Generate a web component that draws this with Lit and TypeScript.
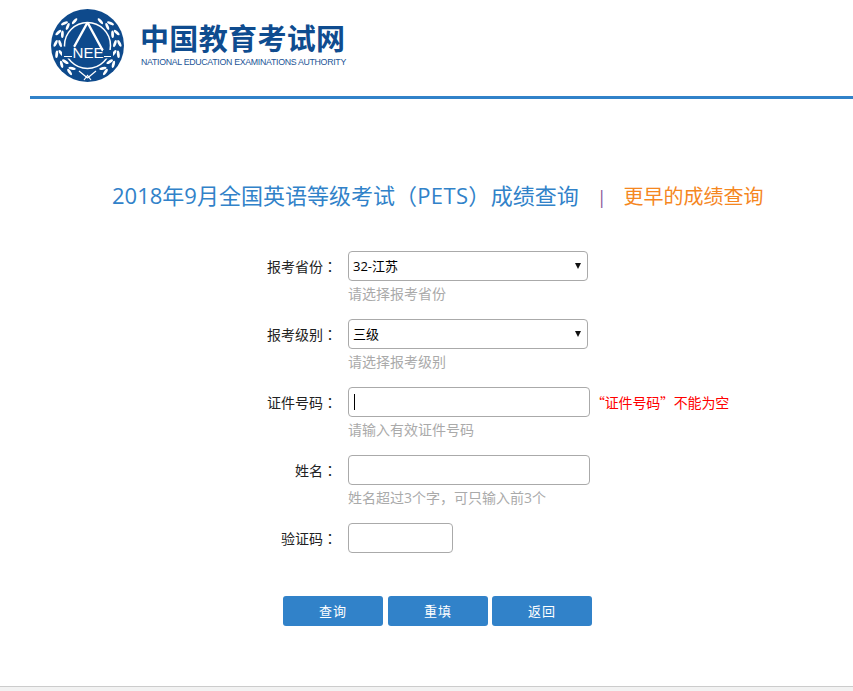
import { LitElement, html, css, svg } from "lit";
import { customElement } from "lit/decorators.js";

const sprigs = [-56, -36, -16, 4, 24, 44, 62];

function leaf(cx: number, cy: number, tilt: number) {
  const x = (36.5 + cx).toFixed(1);
  const y = (36.5 - cy).toFixed(1);
  return svg`<ellipse cx=${x} cy=${y} rx="1.4" ry="3.7" fill="#fff" transform=${`rotate(${tilt.toFixed(1)} ${x} ${y})`}></ellipse>`;
}

function laurel(side: number) {
  return sprigs.map((a) => {
    const rad = (a * Math.PI) / 180;
    const tangent = side * a;
    const inner = leaf(side * 27.5 * Math.cos(rad), 27.5 * Math.sin(rad), -tangent + side * 22);
    const outer = leaf(side * 32 * Math.cos(rad), 32 * Math.sin(rad), -tangent - side * 22);
    return a === 62 ? inner : svg`${inner}${outer}`;
  });
}

const logo = html`<svg class="emblem" viewBox="0 0 73 73" width="73" height="73" aria-hidden="true">
  <circle cx="36.5" cy="36.5" r="36.5" fill="#0e4a8c"></circle>
  <circle cx="36.5" cy="36.5" r="23" fill="none" stroke="#fff" stroke-width="1.5"></circle>
  ${laurel(1)}${laurel(-1)}
  <path d="M36.5 13.5 L23 38 M36.5 13.5 L52 42" stroke="#fff" stroke-width="2.4" fill="none"></path>
  <rect x="11" y="37.5" width="12" height="12" fill="#0e4a8c"></rect>
  <rect x="52" y="41" width="10" height="8.5" fill="#0e4a8c"></rect>
  <path d="M13 47.5 L21 47.5 M53 47.5 L60 47.5" stroke="#fff" stroke-width="1.2"></path>
  <path d="M28 62 L36.5 69 M45 62 L36.5 69 M33 71 L36.5 66.5 L40 71" stroke="#fff" stroke-width="1.2" fill="none"></path>
  <text x="37" y="48.5" text-anchor="middle" class="nee" textLength="31" lengthAdjust="spacingAndGlyphs">NEE</text>
</svg>`;

@customElement("app-root")
export class AppRoot extends LitElement {
  static styles = css`
    :host {
      display: block;
      height: 691px;
      position: relative;
      overflow: hidden;
      background: #fff;
      font-family: "Open Sans", "Noto Sans CJK SC", sans-serif;
      font-size: 14px;
      color: #222;
    }
    .head {
      margin-left: 30px;
      height: 96px;
      box-sizing: content-box;
      border-bottom: 3px solid #3182c9;
      padding-left: 21px;
      display: flex;
      align-items: flex-start;
      gap: 16px;
    }
    .emblem {
      margin-top: 9px;
      flex: none;
    }
    .nee {
      font: 400 14px "Liberation Sans", sans-serif;
      fill: #fff;
    }
    .brand {
      display: flex;
      flex-direction: column;
      margin-top: 22px;
    }
    .brand-cn {
      font-family: "Noto Sans CJK SC", sans-serif;
      font-weight: 700;
      font-size: 29px;
      line-height: 30px;
      letter-spacing: 0.35px;
      color: #0f4c8f;
      white-space: nowrap;
    }
    .brand-en {
      font-family: "Liberation Sans", sans-serif;
      font-size: 8.8px;
      line-height: 11px;
      margin: 5px 0 0 1px;
      color: #1b5596;
      white-space: nowrap;
      letter-spacing: -0.31px;
    }
    .title {
      margin: 82px 0 0 112px;
      height: 28px;
      display: flex;
      align-items: baseline;
      font-size: 22px;
      font-weight: 400;
      line-height: 28px;
      white-space: nowrap;
      color: #3182c9;
    }
    .pets {
      letter-spacing: 0.35px;
    }
    .sep {
      margin: 0 17px 0 18px;
      font-size: 18px;
      color: #8a5a9a;
    }
    .more {
      font-size: 20px;
      color: #f5871f;
    }
    .form {
      margin-top: 42px;
      display: flex;
      flex-direction: column;
      gap: 16px;
    }
    .row {
      display: grid;
      grid-template-columns: 337px auto 1fr;
      column-gap: 11px;
      align-items: center;
    }
    .label {
      text-align: right;
      font-size: 14px;
      color: #222;
      white-space: pre;
    }
    .colon {
      font-family: "Noto Sans CJK TC", sans-serif;
    }
    .field {
      position: relative;
      height: 30px;
      box-sizing: border-box;
      display: block;
    }
    select,
    input {
      display: block;
      width: 100%;
      height: 30px;
      box-sizing: border-box;
      border: 1px solid #aaa;
      border-radius: 4px;
      background: #fff;
      margin: 0;
      outline: none;
      font: inherit;
      font-size: 13px;
      color: #000;
    }
    select {
      appearance: none;
      padding: 0 16px 0 4px;
    }
    .sel {
      width: 240px;
    }
    .txt {
      width: 242px;
    }
    .code {
      width: 105px;
    }
    .arrow {
      position: absolute;
      right: 7px;
      top: 12px;
      border: 3px solid transparent;
      border-top: 6px solid #111;
      border-bottom: 0;
      pointer-events: none;
    }
    .caret {
      position: absolute;
      left: 6px;
      top: 7px;
      width: 1px;
      height: 16px;
      background: #000;
    }
    .err {
      font-family: "Noto Sans CJK SC", sans-serif;
      color: #f00;
      font-size: 14px;
      letter-spacing: -0.2px;
      margin-left: -10px;
      white-space: nowrap;
    }
    .hint {
      grid-column: 2 / 4;
      font-size: 14px;
      line-height: 18px;
      height: 18px;
      margin-top: 4px;
      color: #aaa;
      white-space: nowrap;
    }
    .actions {
      margin: 43px 0 0 283px;
      display: flex;
      gap: 5px;
    }
    .actions button:last-child {
      margin-left: -1px;
    }
    button {
      width: 100px;
      height: 30px;
      border: 0;
      border-radius: 3px;
      background: #3182c9;
      color: #fff;
      font: inherit;
      font-size: 13px;
      letter-spacing: 1px;
      padding: 0 0 2px;
    }
    .foot {
      position: absolute;
      left: 0;
      right: 0;
      bottom: 0;
      height: 4px;
      background: #f2f2f2;
      border-top: 1px solid #ccc;
    }
  `;

  private label(text: string) {
    return html`<div class="label">${text}<span class="colon">：</span></div>`;
  }

  render() {
    return html`
      <header class="head">
        ${logo}
        <div class="brand">
          <div class="brand-cn">中国教育考试网</div>
          <div class="brand-en">NATIONAL EDUCATION EXAMINATIONS AUTHORITY</div>
        </div>
      </header>
      <h1 class="title">
        <span>2018年9月全国英语等级考试<span class="pets">（PETS）</span>成绩查询</span>
        <span class="sep">|</span>
        <span class="more">更早的成绩查询</span>
      </h1>
      <div class="form">
        <div class="row">
          ${this.label("报考省份")}
          <div class="field sel">
            <select><option>32-江苏</option></select><span class="arrow"></span>
          </div>
          <span></span>
          <div class="hint">请选择报考省份</div>
        </div>
        <div class="row">
          ${this.label("报考级别")}
          <div class="field sel">
            <select><option>三级</option></select><span class="arrow"></span>
          </div>
          <span></span>
          <div class="hint">请选择报考级别</div>
        </div>
        <div class="row">
          ${this.label("证件号码")}
          <div class="field txt"><input type="text" /><span class="caret"></span></div>
          <div class="err">“证件号码”不能为空</div>
          <div class="hint">请输入有效证件号码</div>
        </div>
        <div class="row">
          ${this.label("姓名")}
          <div class="field txt"><input type="text" /></div>
          <span></span>
          <div class="hint">姓名超过3个字，可只输入前3个</div>
        </div>
        <div class="row">
          ${this.label("验证码")}
          <div class="field code"><input type="text" /></div>
          <span></span>
        </div>
      </div>
      <div class="actions">
        <button>查询</button><button>重填</button><button>返回</button>
      </div>
      <div class="foot"></div>
    `;
  }
}
